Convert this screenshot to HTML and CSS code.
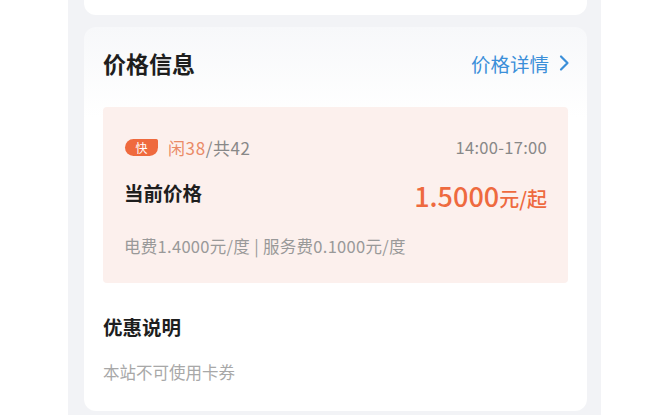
FILE: index.html
```html
<!DOCTYPE html>
<html lang="zh-CN">
<head>
    <meta charset="UTF-8">
    <meta name="viewport" content="width=device-width, initial-scale=1.0">
    <title>价格信息</title>
    <link rel="stylesheet" href="styles.css">
</head>
<body>
    <div class="phone">
        <div class="card card-top"></div>
        <div class="card card-main">
            <div class="card-header">
                <h2>价格信息</h2>
                <a class="more" href="#">价格详情
                    <svg width="12" height="18" viewBox="0 0 12 18"><path d="M3 2.5l6.5 6.5-6.5 6.5" fill="none" stroke="#3b8fd9" stroke-width="2.2" stroke-linecap="round" stroke-linejoin="round"/></svg>
                </a>
            </div>
            <div class="price-box">
                <div class="row">
                    <div class="pile">
                        <span class="badge">快</span>
                        <span class="free">闲38</span><span class="total">/共42</span>
                    </div>
                    <span class="time">14:00-17:00</span>
                </div>
                <div class="row row-price">
                    <span class="label">当前价格</span>
                    <span class="price">1.5000<small>元/起</small></span>
                </div>
                <div class="detail">电费1.4000元/度 | 服务费0.1000元/度</div>
            </div>
            <h3>优惠说明</h3>
            <p class="note">本站不可使用卡券</p>
        </div>
    </div>
</body>
</html>
```

FILE: styles.css
```css
body {
    margin: 0;
    padding: 0;
    background: #fff;
    font-family: "Noto Sans CJK SC", "Noto Sans", sans-serif;
    overflow: hidden;
    height: 100vh;
}
.phone {
    width: 503px;
    margin-left: 68px;
    padding: 0 14px 0 16px;
    height: 100%;
    background: #f2f3f6;
}
.card {
    background: #fff;
    border-radius: 12px;
    padding: 22px 19px 29px;
    margin-bottom: 12px;
}
.card-main {
    background: linear-gradient(#f7f8fa, #fff 90px);
}
.card-top {
    height: 15px;
    padding: 0;
    border-radius: 0 0 12px 12px;
}
.card-header {
    display: flex;
    justify-content: space-between;
    align-items: center;
    height: 28px;
    margin-bottom: 30px;
}
h2 {
    margin: 0;
    font-size: 23px;
    font-weight: bold;
    color: #1e1e1e;
}
.more {
    display: flex;
    align-items: center;
    gap: 9px;
    font-size: 19.5px;
    color: #3b8fd9;
    text-decoration: none;
    margin-right: -2px;
}
.price-box {
    background: #fcf0ed;
    border-radius: 4px;
    padding: 30px 21px 27px;
}
.row {
    display: flex;
    justify-content: space-between;
    align-items: center;
    height: 20px;
}
.pile {
    display: flex;
    align-items: center;
    font-size: 17px;
    letter-spacing: 0.6px;
}
.badge {
    width: 33px;
    height: 17px;
    line-height: 17px;
    text-align: center;
    font-size: 12px;
    letter-spacing: 0;
    color: #fff;
    background: #ef6a3e;
    border-radius: 10px 2px 10px 10px;
    margin: 0 10px 0 1px;
}
.free {
    color: #ea8a66;
}
.total {
    color: #888;
}
.time {
    font-size: 16.5px;
    letter-spacing: 0.3px;
    color: #888;
}
.row-price {
    height: 30px;
    margin-top: 23px;
}
.label {
    font-size: 19.5px;
    font-weight: bold;
    color: #1e1e1e;
    margin-bottom: 6px;
}
.price {
    font-size: 27px;
    color: #ee6a3f;
    font-weight: 500;
}
.price small {
    font-size: 20px;
}
.detail {
    margin-top: 26px;
    font-size: 16.5px;
    letter-spacing: 0.3px;
    color: #999;
    line-height: 20px;
}
h3 {
    margin: 31px 0 0;
    font-size: 19.5px;
    line-height: 26px;
    font-weight: bold;
    color: #1e1e1e;
}
.note {
    margin: 22px 0 0;
    font-size: 16.5px;
    line-height: 20px;
    color: #a8a8a8;
}
```
